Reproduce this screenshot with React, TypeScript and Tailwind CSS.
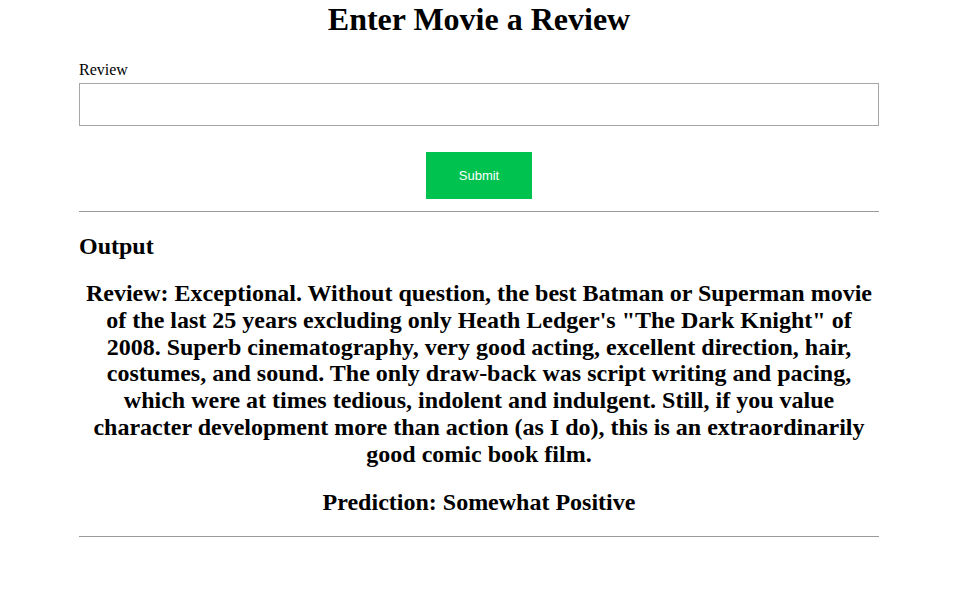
export default function App() {
  const review =
    'Exceptional. Without question, the best Batman or Superman movie of the last 25 years excluding only Heath Ledger\'s "The Dark Knight" of 2008. Superb cinematography, very good acting, excellent direction, hair, costumes, and sound. The only draw-back was script writing and pacing, which were at times tedious, indolent and indulgent. Still, if you value character development more than action (as I do), this is an extraordinarily good comic book film.';

  return (
    <div className="min-h-screen bg-white text-black font-['Liberation_Serif',serif]">
      <div className="w-[800px] ml-[79px]">
        <h1 className="pt-px text-[32px] font-bold text-center leading-[1.15]">Enter Movie a Review</h1>

        <form className="mt-[23px]" onSubmit={(e) => e.preventDefault()}>
          <label htmlFor="review" className="block text-base leading-[1.15]">
            Review
          </label>
          <input
            id="review"
            type="text"
            className="mt-1 block w-full h-[43px] border border-[#a6a6a6] px-3 outline-none"
          />
          <div className="flex justify-center mt-[26px]">
            <button
              type="submit"
              className="w-[106px] h-[47px] bg-[#00c24e] text-white text-[13px] font-['Liberation_Sans',sans-serif]"
            >
              Submit
            </button>
          </div>
        </form>

        <hr className="mt-3 border-t border-[#9a9a9a]" />

        <h2 className="mt-[21px] text-2xl font-bold leading-[1.15]">Output</h2>
        <h2 className="mt-[19px] text-2xl font-bold leading-[1.12] text-center px-1">
          Review: {review}
        </h2>
        <h2 className="mt-[21px] text-2xl font-bold leading-[1.15] text-center">
          Prediction: Somewhat Positive
        </h2>
        <hr className="mt-[19px] border-t border-[#9a9a9a]" />
      </div>
    </div>
  );
}
